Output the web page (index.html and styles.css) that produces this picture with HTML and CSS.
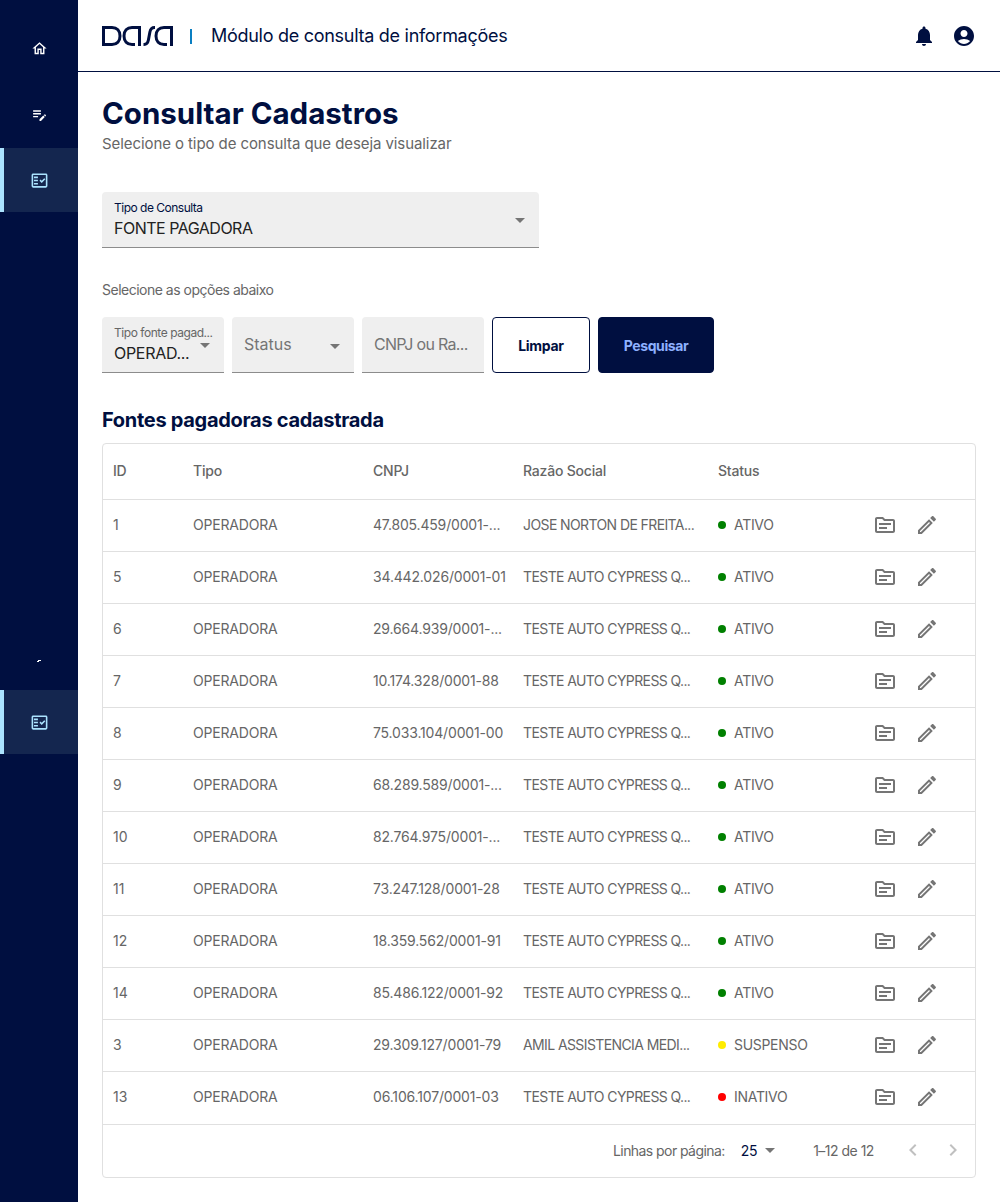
FILE: index.html
```html
<!DOCTYPE html>
<html lang="pt-BR">
<head>
<meta charset="utf-8">
<title>Consultar Cadastros</title>
<link rel="stylesheet" href="styles.css">
</head>
<body>
<svg class="sprite" aria-hidden="true">
  <symbol id="i-topic" viewBox="0 0 24 24"><path d="M20 6h-8l-2-2H4C2.9 4 2.01 4.9 2.01 6L2 18c0 1.1.9 2 2 2h16c1.1 0 2-.9 2-2V8c0-1.1-.9-2-2-2zm0 12H4V6h5.17l1.41 1.41.59.59H20v10zM6 14h8v2H6v-2zm0-4h12v2H6v-2z"/></symbol>
  <symbol id="i-edit" viewBox="0 0 24 24"><path d="M14.06 9.02l.92.92L5.92 19H5v-.92l9.06-9.06M17.66 3c-.25 0-.51.1-.7.29l-1.83 1.83 3.75 3.75 1.83-1.83c.39-.39.39-1.02 0-1.41l-2.34-2.34c-.2-.2-.45-.29-.71-.29zm-3.6 3.19L3 17.25V21h3.75L17.81 9.94l-3.75-3.75z"/></symbol>
  <symbol id="i-fact" viewBox="0 0 24 24"><path fill-rule="evenodd" d="M20 3H4c-1.1 0-2 .9-2 2v14c0 1.1.9 2 2 2h16c1.1 0 2-.9 2-2V5c0-1.1-.9-2-2-2zm0 16H4V5h16v14zM19.41 10.42 17.99 9l-3.17 3.17-1.41-1.42L12 12.16 14.82 15zM5 7h5v2H5zM5 11h5v2H5zM5 15h5v2H5z"/></symbol>
</svg>
<div class="app">
  <nav class="sidebar">
    <div class="nav-group">
      <a class="nav-item"><svg class="nav-icon" viewBox="0 0 24 24"><path d="M12 5.69l5 4.5V18h-2v-6H9v6H7v-7.81l5-4.5M12 3L2 12h3v8h6v-6h2v6h6v-8h3L12 3z"/></svg></a>
      <a class="nav-item"><svg class="nav-icon" viewBox="0 0 24 24"><path d="M3 10h11v2H3v-2zm0-2h11V6H3v2zm0 8h7v-2H3v2zm15.01-3.13.71-.71c.39-.39 1.02-.39 1.41 0l.71.71c.39.39.39 1.02 0 1.41l-.71.71-2.12-2.12zm-.71.71-5.3 5.3V21h2.12l5.3-5.3-2.12-2.12z"/></svg></a>
      <a class="nav-item active"><svg class="nav-icon fact"><use href="#i-fact"/></svg></a>
    </div>
    <div class="nav-group bottom">
      <a class="nav-item tiny"><svg class="tiny-icon" viewBox="0 0 4 3"><path d="M0 2h1V1h3v1H2v1H0z"/></svg></a>
      <a class="nav-item active"><svg class="nav-icon fact"><use href="#i-fact"/></svg></a>
    </div>
  </nav>
  <div class="content">
    <header class="topbar">
      <svg class="logo" viewBox="0 0 71 20" aria-label="Dasa">
        <path d="M1.500 1.500H10c5 0 8 3.500 8 8.500s-3 8.500-8 8.500H1.500z"/>
        <path d="M37.500 20V1.500H30c-5 0-8 3.500-8 8.500s3 8.500 8 8.500h3"/>
        <path d="M53 1.500h-.5c-3 0-4 1.500-4.600 4.500l-1.500 8c-.6 3-1.800 4.500-4.400 4.500h-.5"/>
        <path d="M69.500 20V1.500H62c-5 0-8 3.500-8 8.500s3 8.500 8 8.500h3"/>
      </svg>
      <span class="brand-sep"></span>
      <span class="module-title">Módulo de consulta de informações</span>
      <div class="top-actions">
        <svg class="top-icon" viewBox="0 0 24 24"><path d="M12 22c1.100 0 2-.9 2-2h-4c0 1.100.89 2 2 2zm6-6v-5c0-3.070-1.640-5.640-4.500-6.320V4c0-.83-.67-1.500-1.500-1.500s-1.500.67-1.500 1.500v.68C7.630 5.360 6 7.920 6 11v5l-2 2v1h16v-1l-2-2z"/></svg>
        <svg class="top-icon" viewBox="0 0 24 24"><path d="M12 2C6.480 2 2 6.480 2 12s4.480 10 10 10 10-4.480 10-10S17.520 2 12 2zm0 4c1.930 0 3.500 1.570 3.500 3.500S13.930 13 12 13s-3.500-1.570-3.500-3.500S10.070 6 12 6zm0 14c-2.030 0-4.430-.82-6.140-2.880C7.550 15.800 9.680 15 12 15s4.450.8 6.140 2.120C16.430 19.180 14.030 20 12 20z"/></svg>
      </div>
    </header>
    <main class="main">
      <h1 class="page-title">Consultar Cadastros</h1>
      <p class="page-sub">Selecione o tipo de consulta que deseja visualizar</p>

      <div class="field field-main">
        <span class="field-label">Tipo de Consulta</span>
        <span class="field-value">FONTE PAGADORA</span>
        <span class="caret caret-main"></span>
      </div>

      <p class="options-label">Selecione as opções abaixo</p>

      <div class="filters">
        <div class="field field-small">
          <span class="field-label">Tipo fonte pagad...</span>
          <span class="field-value">OPERAD...</span>
          <span class="caret caret-type"></span>
        </div>
        <div class="field field-small field-empty">
          <span class="field-placeholder">Status</span>
          <span class="caret caret-status"></span>
        </div>
        <div class="field field-small field-empty">
          <span class="field-placeholder tight">CNPJ ou Ra...</span>
        </div>
        <button class="btn btn-outline">Limpar</button>
        <button class="btn btn-solid">Pesquisar</button>
      </div>

      <h2 class="section-title">Fontes pagadoras cadastrada</h2>

      <div class="grid-card">
        <table class="grid">
          <colgroup>
            <col class="c-id"><col class="c-tipo"><col class="c-cnpj"><col class="c-razao"><col class="c-status"><col>
          </colgroup>
          <thead>
            <tr><th>ID</th><th>Tipo</th><th>CNPJ</th><th>Razão Social</th><th>Status</th><th></th></tr>
          </thead>
          <tbody>
            <tr><td>1</td><td class="t-tipo">OPERADORA</td><td class="t-cnpj">47.805.459/0001-...</td><td class="t-razao">JOSE NORTON DE FREITA...</td><td class="t-status"><span class="dot green"></span>ATIVO</td><td class="actions"><svg class="act"><use href="#i-topic"/></svg><svg class="act"><use href="#i-edit"/></svg></td></tr>
            <tr><td>5</td><td class="t-tipo">OPERADORA</td><td class="t-cnpj">34.442.026/0001-01</td><td class="t-razao">TESTE AUTO CYPRESS Q...</td><td class="t-status"><span class="dot green"></span>ATIVO</td><td class="actions"><svg class="act"><use href="#i-topic"/></svg><svg class="act"><use href="#i-edit"/></svg></td></tr>
            <tr><td>6</td><td class="t-tipo">OPERADORA</td><td class="t-cnpj">29.664.939/0001-...</td><td class="t-razao">TESTE AUTO CYPRESS Q...</td><td class="t-status"><span class="dot green"></span>ATIVO</td><td class="actions"><svg class="act"><use href="#i-topic"/></svg><svg class="act"><use href="#i-edit"/></svg></td></tr>
            <tr><td>7</td><td class="t-tipo">OPERADORA</td><td class="t-cnpj">10.174.328/0001-88</td><td class="t-razao">TESTE AUTO CYPRESS Q...</td><td class="t-status"><span class="dot green"></span>ATIVO</td><td class="actions"><svg class="act"><use href="#i-topic"/></svg><svg class="act"><use href="#i-edit"/></svg></td></tr>
            <tr><td>8</td><td class="t-tipo">OPERADORA</td><td class="t-cnpj">75.033.104/0001-00</td><td class="t-razao">TESTE AUTO CYPRESS Q...</td><td class="t-status"><span class="dot green"></span>ATIVO</td><td class="actions"><svg class="act"><use href="#i-topic"/></svg><svg class="act"><use href="#i-edit"/></svg></td></tr>
            <tr><td>9</td><td class="t-tipo">OPERADORA</td><td class="t-cnpj">68.289.589/0001-...</td><td class="t-razao">TESTE AUTO CYPRESS Q...</td><td class="t-status"><span class="dot green"></span>ATIVO</td><td class="actions"><svg class="act"><use href="#i-topic"/></svg><svg class="act"><use href="#i-edit"/></svg></td></tr>
            <tr><td>10</td><td class="t-tipo">OPERADORA</td><td class="t-cnpj">82.764.975/0001-...</td><td class="t-razao">TESTE AUTO CYPRESS Q...</td><td class="t-status"><span class="dot green"></span>ATIVO</td><td class="actions"><svg class="act"><use href="#i-topic"/></svg><svg class="act"><use href="#i-edit"/></svg></td></tr>
            <tr><td>11</td><td class="t-tipo">OPERADORA</td><td class="t-cnpj">73.247.128/0001-28</td><td class="t-razao">TESTE AUTO CYPRESS Q...</td><td class="t-status"><span class="dot green"></span>ATIVO</td><td class="actions"><svg class="act"><use href="#i-topic"/></svg><svg class="act"><use href="#i-edit"/></svg></td></tr>
            <tr><td>12</td><td class="t-tipo">OPERADORA</td><td class="t-cnpj">18.359.562/0001-91</td><td class="t-razao">TESTE AUTO CYPRESS Q...</td><td class="t-status"><span class="dot green"></span>ATIVO</td><td class="actions"><svg class="act"><use href="#i-topic"/></svg><svg class="act"><use href="#i-edit"/></svg></td></tr>
            <tr><td>14</td><td class="t-tipo">OPERADORA</td><td class="t-cnpj">85.486.122/0001-92</td><td class="t-razao">TESTE AUTO CYPRESS Q...</td><td class="t-status"><span class="dot green"></span>ATIVO</td><td class="actions"><svg class="act"><use href="#i-topic"/></svg><svg class="act"><use href="#i-edit"/></svg></td></tr>
            <tr><td>3</td><td class="t-tipo">OPERADORA</td><td class="t-cnpj">29.309.127/0001-79</td><td class="t-razao">AMIL ASSISTENCIA MEDI...</td><td class="t-status"><span class="dot yellow"></span>SUSPENSO</td><td class="actions"><svg class="act"><use href="#i-topic"/></svg><svg class="act"><use href="#i-edit"/></svg></td></tr>
            <tr><td>13</td><td class="t-tipo">OPERADORA</td><td class="t-cnpj">06.106.107/0001-03</td><td class="t-razao">TESTE AUTO CYPRESS Q...</td><td class="t-status"><span class="dot red"></span>INATIVO</td><td class="actions"><svg class="act"><use href="#i-topic"/></svg><svg class="act"><use href="#i-edit"/></svg></td></tr>
          </tbody>
        </table>
        <div class="pager">
          <span class="pager-label">Linhas por página:</span>
          <span class="pager-size">25</span>
          <span class="caret caret-pager"></span>
          <span class="pager-range">1–12 de 12</span>
          <svg class="pager-nav" viewBox="0 0 24 24"><path d="M15.410 7.410 14 6l-6 6 6 6 1.410-1.410L10.830 12z"/></svg>
          <svg class="pager-nav" viewBox="0 0 24 24"><path d="M10 6 8.590 7.410 13.170 12l-4.580 4.590L10 18l6-6z"/></svg>
        </div>
      </div>
    </main>
  </div>
</div>
</body>
</html>
```
FILE: styles.css
```css
* { box-sizing: border-box; }
html, body { margin: 0; padding: 0; }
body {
  font-family: "Inter", "Noto Sans", sans-serif;
  color: #000f40;
  background: #fff;
}
.sprite { display: none; }
.app { display: flex; min-height: 1202px; }

.sidebar {
  width: 78px;
  flex: none;
  background: #000f40;
  padding-top: 16px;
  display: flex;
  flex-direction: column;
}
.nav-group { display: flex; flex-direction: column; gap: 2px; }
.nav-group.bottom { margin-top: 414px; gap: 0; }
.nav-item {
  height: 64px;
  display: flex;
  align-items: center;
  justify-content: center;
  color: #fff;
}
.nav-item.active {
  background: #14264f;
  border-left: 4px solid #abe3ff;
  padding-right: 4px;
  color: #abe3ff;
}
.nav-icon { width: 17px; height: 17px; fill: currentColor; }
.nav-icon.fact { width: 19px; height: 19px; }
.nav-item.tiny { align-items: flex-end; padding-bottom: 28px; }
.tiny-icon { width: 4px; height: 3px; fill: #fff; }

.content { flex: 1; min-width: 0; display: flex; flex-direction: column; }
.topbar {
  height: 72px;
  border-bottom: 1px solid #000f40;
  padding: 0 24px;
  display: flex;
  align-items: center;
}
.logo { width: 71px; height: 20px; fill: none; stroke: #000f40; stroke-width: 3; margin-top: 1px; }
.brand-sep { width: 2px; height: 15px; background: #0a7fc2; margin: 1px 19px 0 17px; }
.module-title { font-size: 18px; font-weight: 400; letter-spacing: -0.28px; }
.top-actions { margin-left: auto; display: flex; gap: 16px; }
.top-icon { width: 24px; height: 24px; fill: #000f40; display: block; }

.main { padding: 23px 24px 0; }
.page-title { margin: 0; font-size: 29.5px; line-height: 36px; font-weight: 700; }
.page-sub { margin: 3px 0 0; font-size: 15px; line-height: 20px; color: #666; letter-spacing: -0.08px; }

.field {
  position: relative;
  background: #efefef;
  border-bottom: 1px solid #8c8c8c;
  border-radius: 4px 4px 0 0;
}
.field-main { width: 437px; height: 56px; margin-top: 38px; padding: 9px 12px 0; }
.field-label {
  display: block;
  font-size: 12px;
  line-height: 14px;
  color: #444;
  letter-spacing: -0.5px;
}
.field-main .field-label { color: #000f40; }
.field-value { display: block; font-size: 16px; line-height: 22px; color: #222; margin-top: 2px; letter-spacing: -0.5px; }
.caret {
  position: absolute;
  width: 0;
  height: 0;
  border-left: 5px solid transparent;
  border-right: 5px solid transparent;
  border-top: 5px solid #757575;
}
.caret-main { right: 14px; top: 26px; }
.caret-type { right: 14px; top: 26px; }
.caret-status { right: 14px; top: 27px; }
.options-label { margin: 32px 0 0; font-size: 14px; line-height: 20px; color: #666; letter-spacing: -0.5px; }
.filters { display: flex; gap: 8px; margin-top: 17px; }
.field-small { width: 122px; height: 56px; padding: 9px 12px 0; }
.field-small .field-label { color: #666; white-space: nowrap; letter-spacing: -0.45px; }
.field-small .field-value { letter-spacing: -0.3px; }
.field-empty { padding: 0 12px 2px; display: flex; align-items: center; }
.field-placeholder { font-size: 16px; color: #757575; white-space: nowrap; }
.field-placeholder.tight { letter-spacing: -0.7px; }
.btn {
  height: 56px;
  border-radius: 4px;
  font: 700 14px "Inter", "Noto Sans", sans-serif;
  padding: 0;
}
.btn-outline { width: 98px; background: #fff; border: 1px solid #000f40; color: #000f40; letter-spacing: -0.3px; }
.btn-solid { width: 116px; background: #000f40; border: 1px solid #000f40; color: #8eb1ff; letter-spacing: -0.4px; }

.section-title { margin: 35px 0 0; font-size: 20px; line-height: 24px; font-weight: 700; letter-spacing: -0.3px; }
.grid-card {
  margin-top: 11px;
  border: 1px solid #e0e0e0;
  border-radius: 4px;
  width: 874px;
}
.grid { width: 100%; border-collapse: collapse; table-layout: fixed; font-size: 14px; color: #666; margin-bottom: 1px; }
.c-id { width: 80px; }
.c-tipo { width: 180px; }
.c-cnpj { width: 150px; }
.c-razao { width: 195px; }
.c-status { width: 150px; }
.grid th {
  height: 55px;
  padding: 0 10px 2px;
  text-align: left;
  font-weight: 500;
  color: #666;
  letter-spacing: -0.2px;
}
.grid td {
  height: 52px;
  padding: 0 10px 2px;
  border-top: 1px solid #e0e0e0;
  white-space: nowrap;
  overflow: hidden;
}
.t-tipo { letter-spacing: -0.2px; }
.t-cnpj { letter-spacing: -0.17px; }
.t-razao { letter-spacing: -0.6px; }
.t-status { letter-spacing: -0.3px; }
.dot { display: inline-block; width: 8px; height: 8px; border-radius: 50%; margin-right: 8px; vertical-align: 1px; }
.green { background: #008000; }
.yellow { background: #ffec00; }
.red { background: #ff0000; }
.grid td.actions { padding: 0 0 0 15px; }
.act { width: 24px; height: 24px; fill: #757575; vertical-align: middle; margin-left: 18px; }
.act:first-child { margin-left: 0; }
.pager {
  height: 53px;
  border-top: 1px solid #e0e0e0;
  display: flex;
  align-items: center;
  position: relative;
  padding: 0 0 2px 510px;
  font-size: 14px;
  color: #666;
  white-space: nowrap;
}
.pager-label { letter-spacing: -0.57px; }
.pager-size { color: #000f40; margin-left: 16px; letter-spacing: -0.3px; }
.caret-pager { position: static; margin-left: 8px; }
.pager-range { margin-left: 38px; letter-spacing: -0.5px; }
.pager-nav { width: 24px; height: 24px; fill: #c0c0c0; margin-left: 16px; }
.pager-range + .pager-nav { margin-left: 27px; }
```
